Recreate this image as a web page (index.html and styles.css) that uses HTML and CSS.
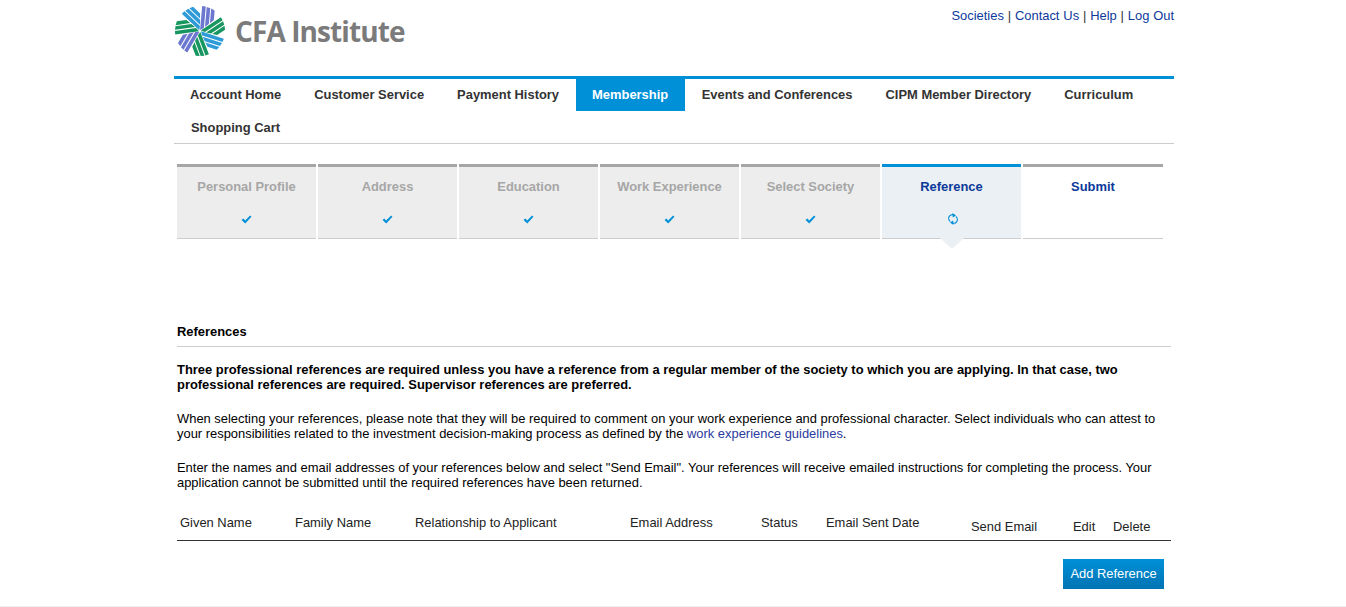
FILE: index.html
```html
<!DOCTYPE html>
<html lang="en">
<head>
<meta charset="utf-8">
<title>CFA Institute - Membership</title>
<link rel="stylesheet" href="styles.css">
</head>
<body>
<div class="page">
  <header class="masthead">
    <a class="logo" href="#">
      <svg class="logo-mark" width="52" height="52" viewBox="-26 -26 52 52" aria-hidden="true">
        <defs>
          <g id="petal">
            <path d="M0 -1 3.6 -3.4V-24.8L0 -25Z"/>
            <path d="M4.6 -4.3 8.2 -7.7V-23.6L4.6 -24.6Z"/>
            <path d="M9.2 -8.6 12.8 -12V-21.6L9.2 -23.3Z"/>
          </g>
        </defs>
        <use href="#petal" fill="#6c78cf" transform="rotate(5)"/>
        <use href="#petal" fill="#17965f" transform="rotate(56.4)"/>
        <use href="#petal" fill="#2e9bd8" transform="rotate(107.8)"/>
        <use href="#petal" fill="#17965f" transform="rotate(159.2)"/>
        <use href="#petal" fill="#6c78cf" transform="rotate(210.6)"/>
        <use href="#petal" fill="#17965f" transform="rotate(262)"/>
        <use href="#petal" fill="#2e9bd8" transform="rotate(313.4)"/>
      </svg>
      <span class="logo-text">CFA Institute</span>
    </a>
    <nav class="utility">
      <a href="#">Societies</a> | <a href="#">Contact Us</a> | <a href="#">Help</a> | <a href="#">Log Out</a>
    </nav>
  </header>

  <nav class="mainnav">
    <a href="#">Account Home</a>
    <a href="#">Customer Service</a>
    <a href="#">Payment History</a>
    <a href="#" class="active">Membership</a>
    <a href="#">Events and Conferences</a>
    <a href="#">CIPM Member Directory</a>
    <a href="#">Curriculum</a>
    <a href="#" class="cart">Shopping Cart</a>
  </nav>

  <ol class="steps">
    <li class="step done"><span class="step-name">Personal Profile</span><svg class="tick" width="11" height="9" viewBox="0 0 12 10"><path d="M0.5 5.5 2.5 3.8 4.5 6 10 0.5 11.5 2 4.6 9.5Z"/></svg></li>
    <li class="step done"><span class="step-name">Address</span><svg class="tick" width="11" height="9" viewBox="0 0 12 10"><path d="M0.5 5.5 2.5 3.8 4.5 6 10 0.5 11.5 2 4.6 9.5Z"/></svg></li>
    <li class="step done"><span class="step-name">Education</span><svg class="tick" width="11" height="9" viewBox="0 0 12 10"><path d="M0.5 5.5 2.5 3.8 4.5 6 10 0.5 11.5 2 4.6 9.5Z"/></svg></li>
    <li class="step done"><span class="step-name">Work Experience</span><svg class="tick" width="11" height="9" viewBox="0 0 12 10"><path d="M0.5 5.5 2.5 3.8 4.5 6 10 0.5 11.5 2 4.6 9.5Z"/></svg></li>
    <li class="step done"><span class="step-name">Select Society</span><svg class="tick" width="11" height="9" viewBox="0 0 12 10"><path d="M0.5 5.5 2.5 3.8 4.5 6 10 0.5 11.5 2 4.6 9.5Z"/></svg></li>
    <li class="step current"><span class="step-name">Reference</span><svg class="sync" width="10" height="12" viewBox="0 0 10 12"><path d="M6.6 2.4A3.7 3.7 0 0 0 2.2 8.4M3.4 9.6A3.7 3.7 0 0 0 7.8 3.6"/><path class="fill" d="M4.4 0 8 2.4 4.8 4.4ZM5.6 12 2 9.6 5.2 7.6Z"/></svg></li>
    <li class="step upcoming"><span class="step-name">Submit</span></li>
  </ol>

  <main class="content">
    <h1 class="section-title">References</h1>
    <p class="lead">Three professional references are required unless you have a reference from a regular member of the society to which you are applying. In that case, two professional references are required. Supervisor references are preferred.</p>
    <p class="body-text">When selecting your references, please note that they will be required to comment on your work experience and professional character. Select individuals who can attest to your responsibilities related to the investment decision-making process as defined by the <a href="#">work experience guidelines</a>.</p>
    <p class="body-text">Enter the names and email addresses of your references below and select "Send Email". Your references will receive emailed instructions for completing the process. Your application cannot be submitted until the required references have been returned.</p>

    <table class="ref-table">
      <colgroup>
        <col class="c1"><col class="c2"><col class="c3"><col class="c4"><col class="c5"><col class="c6"><col class="c7"><col class="c8"><col class="c9">
      </colgroup>
      <thead>
        <tr>
          <th>Given Name</th>
          <th>Family Name</th>
          <th>Relationship to Applicant</th>
          <th>Email Address</th>
          <th>Status</th>
          <th>Email Sent Date</th>
          <th class="low">Send Email</th>
          <th class="low">Edit</th>
          <th class="low">Delete</th>
        </tr>
      </thead>
    </table>

    <div class="actions">
      <button class="btn" type="button">Add Reference</button>
    </div>
  </main>
</div>
<footer class="page-end"></footer>
</body>
</html>
```
FILE: styles.css
```css
* { box-sizing: border-box; }
html, body { margin: 0; padding: 0; }
body {
  background: #fff;
  color: #000;
  font-family: "Liberation Sans", Arial, sans-serif;
  font-size: 12.93px;
  line-height: 15px;
}
a { color: #0b3a9a; text-decoration: none; }

.page { width: 1000px; margin-left: 174px; }

.masthead {
  display: flex;
  justify-content: space-between;
  height: 76px;
  padding-top: 5px;
}
.logo { display: flex; align-items: flex-start; gap: 9px; }
.logo-mark { display: block; }
.logo-text {
  font-family: "Open Sans", sans-serif;
  font-weight: 700;
  font-size: 28px;
  line-height: 52px;
  letter-spacing: -0.9px;
  color: #7b7b7b;
}
.utility { padding-top: 3px; color: #333; line-height: 15px; word-spacing: 0.25px; }

.mainnav {
  display: flex;
  flex-wrap: wrap;
  border-top: 3px solid #0090d8;
  border-bottom: 1px solid #ccc;
  height: 68px;
  align-content: flex-start;
}
.mainnav a {
  display: block;
  height: 32px;
  margin-bottom: 1px;
  padding: 8px 16.5px 0;
  color: #333;
  font-weight: bold;
  line-height: 15px;
}
.mainnav a:first-child { padding-left: 16px; }
.mainnav a.active { background: #0090d8; color: #fff; padding: 8px 17px 0 16.5px; }
.mainnav a.cart { padding-left: 17px; }

.steps {
  display: flex;
  gap: 2px;
  list-style: none;
  margin: 20px 0 0 3px;
  padding: 0;
}
.step {
  position: relative;
  flex: 0 0 139px;
  height: 75px;
  border-top: 3px solid #a6a6a6;
  border-bottom: 1px solid #ccc;
  padding-top: 12px;
  text-align: center;
  font-weight: bold;
}
.step:last-child { flex-basis: 140px; }
.step-name { display: block; height: 15px; }
.step .tick { display: block; margin: 21px auto 0; fill: #0090d8; }
.done { background: #ededed; color: #a6a6a6; }
.current { background: #ebf0f4; color: #0b3a9a; border-top-color: #0090d8; }
.current::after {
  content: "";
  position: absolute;
  left: 50%;
  top: 71px;
  margin-left: -12px;
  border: solid transparent;
  border-width: 11px 12px 0;
  border-top-color: #ebf0f4;
}
.upcoming { color: #0b3a9a; }
.step .sync { display: block; margin: 19px 0 0 66px; fill: none; stroke: #0090d8; stroke-width: 1.2; }
.sync .fill { fill: #0090d8; stroke: none; }

.content { margin: 84px 0 0 3px; width: 994px; }
.section-title {
  margin: 0;
  height: 24px;
  font-size: inherit;
  font-weight: bold;
  line-height: 15px;
  padding-top: 1px;
  border-bottom: 1px solid #ccc;
}
.lead { margin: 15px 0 0; font-weight: bold; }
.body-text { margin: 19px 0 0; }
.body-text a { color: #2a3aa0; }

.ref-table {
  table-layout: fixed;
  width: 994px;
  border-collapse: collapse;
  margin-top: 18px;
  border-bottom: 1px solid #333;
}
.ref-table th {
  font-weight: normal;
  text-align: left;
  vertical-align: top;
  height: 32px;
  padding: 7px 0 0 3px;
  color: #222;
}
.ref-table th.low { padding-top: 11px; }
.c1 { width: 115px; } .c2 { width: 120px; } .c3 { width: 215px; }
.c4 { width: 131px; } .c5 { width: 65px; } .c6 { width: 145px; }
.c7 { width: 102px; } .c8 { width: 40px; } .c9 { width: 61px; }

.actions { display: flex; justify-content: flex-end; padding: 18px 7px 0 0; }
.btn {
  width: 101px;
  height: 30px;
  padding: 0;
  border: 0;
  background: linear-gradient(#0090d8, #0073b3);
  color: #fff;
  font: 12.93px/15px "Liberation Sans", Arial, sans-serif;
}
.page-end { margin-top: 17px; border-top: 1px solid #f0f0f0; }
```
